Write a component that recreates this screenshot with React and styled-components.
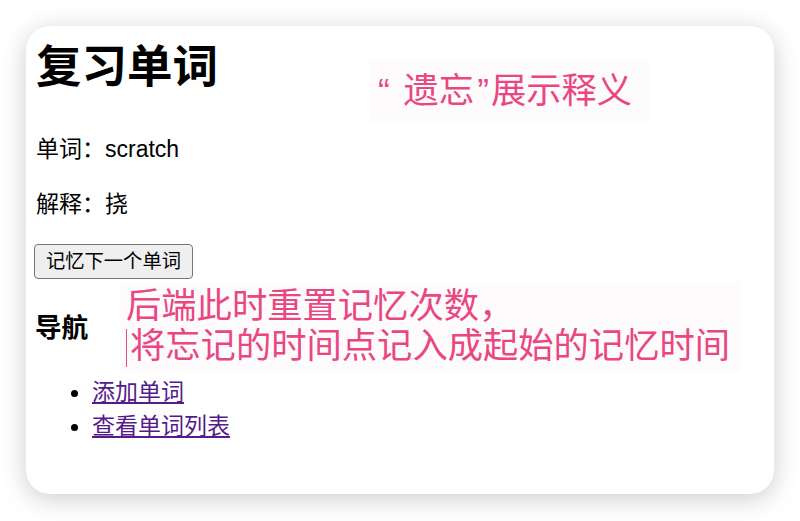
import React from "react";
import styled, { createGlobalStyle } from "styled-components";

const GlobalStyle = createGlobalStyle`
  html, body {
    margin: 0;
    padding: 0;
    background: #ffffff;
  }
  body {
    font-family: "Liberation Sans", "Noto Sans CJK SC", sans-serif;
    color: #000;
  }
`;

const Stage = styled.div`
  width: 800px;
  height: 521px;
  padding: 26px;
  box-sizing: border-box;
  overflow: hidden;
`;

const Card = styled.main`
  position: relative;
  width: 748px;
  height: 468px;
  box-sizing: border-box;
  padding: 14px 10px 0;
  background: #ffffff;
  border-radius: 24px;
  box-shadow: 0 5px 26px rgba(0, 0, 0, 0.2);
  display: flex;
  flex-direction: column;
  align-items: flex-start;
`;

const Title = styled.h1`
  margin: 0;
  font-size: 45.5px;
  line-height: 56px;
  font-weight: 700;
`;

const Field = styled.p`
  margin: ${(p) => p.$top}px 0 0;
  font-size: 23px;
  line-height: 33px;
`;

const NextButton = styled.button`
  margin: 23px 0 0 -2px;
  height: 35px;
  padding: 0 11px;
  font-family: "Liberation Sans", "Noto Sans CJK SC", sans-serif;
  font-size: 19.3px;
  line-height: 31px;
  color: #000;
  background: #efefef;
  border: 1.5px solid #767676;
  border-radius: 4px;
`;

const NavTitle = styled.h3`
  margin: 30px 0 0 -1px;
  font-size: 26.6px;
  line-height: 38px;
  font-weight: 700;
`;

const NavList = styled.ul`
  margin: 28px 0 0;
  padding-left: 56px;
  font-size: 23px;
  line-height: 33px;
`;

const NavItem = styled.li`
  &::marker {
    font-size: 24px;
  }
`;

const NavLink = styled.a`
  color: #551a8b;
  text-decoration: underline;
  text-underline-offset: 2px;
`;

/* pink review notes pasted over the page */
const Note = styled.div`
  position: absolute;
  left: ${(p) => p.$x}px;
  top: ${(p) => p.$y}px;
  width: ${(p) => p.$w}px;
  height: ${(p) => p.$h}px;
  box-sizing: border-box;
  padding: ${(p) => p.$pad};
  background: #fdfbfc;
  color: #ea4681;
  font-family: "Liberation Sans", "Noto Sans CJK SC", sans-serif;
  font-size: 35.3px;
  line-height: 40px;
  white-space: nowrap;
`;

const Quote = styled.span`
  display: inline-block;
  margin: ${(p) => p.$space};
`;

const Caret = styled.span`
  display: inline-block;
  width: 0;
  height: 38px;
  margin-right: 3px;
  vertical-align: -9px;
  border-left: 1.5px solid #ea4681;
`;

export default function App() {
  return (
    <>
      <GlobalStyle />
      <Stage>
        <Card>
          <Title>复习单词</Title>
          <Field $top={37}>单词：scratch</Field>
          <Field $top={22}>解释：挠</Field>
          <NextButton type="button">记忆下一个单词</NextButton>
          <NavTitle>导航</NavTitle>
          <NavList>
            <NavItem>
              <NavLink href="#add">添加单词</NavLink>
            </NavItem>
            <NavItem>
              <NavLink href="#list">查看单词列表</NavLink>
            </NavItem>
          </NavList>

          <Note $x={344} $y={34} $w={280} $h={62} $pad="11px 0 0 8px">
            <Quote $space="0 4px 0 0">“</Quote> 遗忘<Quote $space="0 2px 0 3px">”</Quote>展示释义
          </Note>
          <Note $x={94} $y={256} $w={620} $h={90} $pad="4px 0 0 6px">
            后端此时重置记忆次数，
            <br />
            <Caret />
            将忘记的时间点记入成起始的记忆时间
          </Note>
        </Card>
      </Stage>
    </>
  );
}
